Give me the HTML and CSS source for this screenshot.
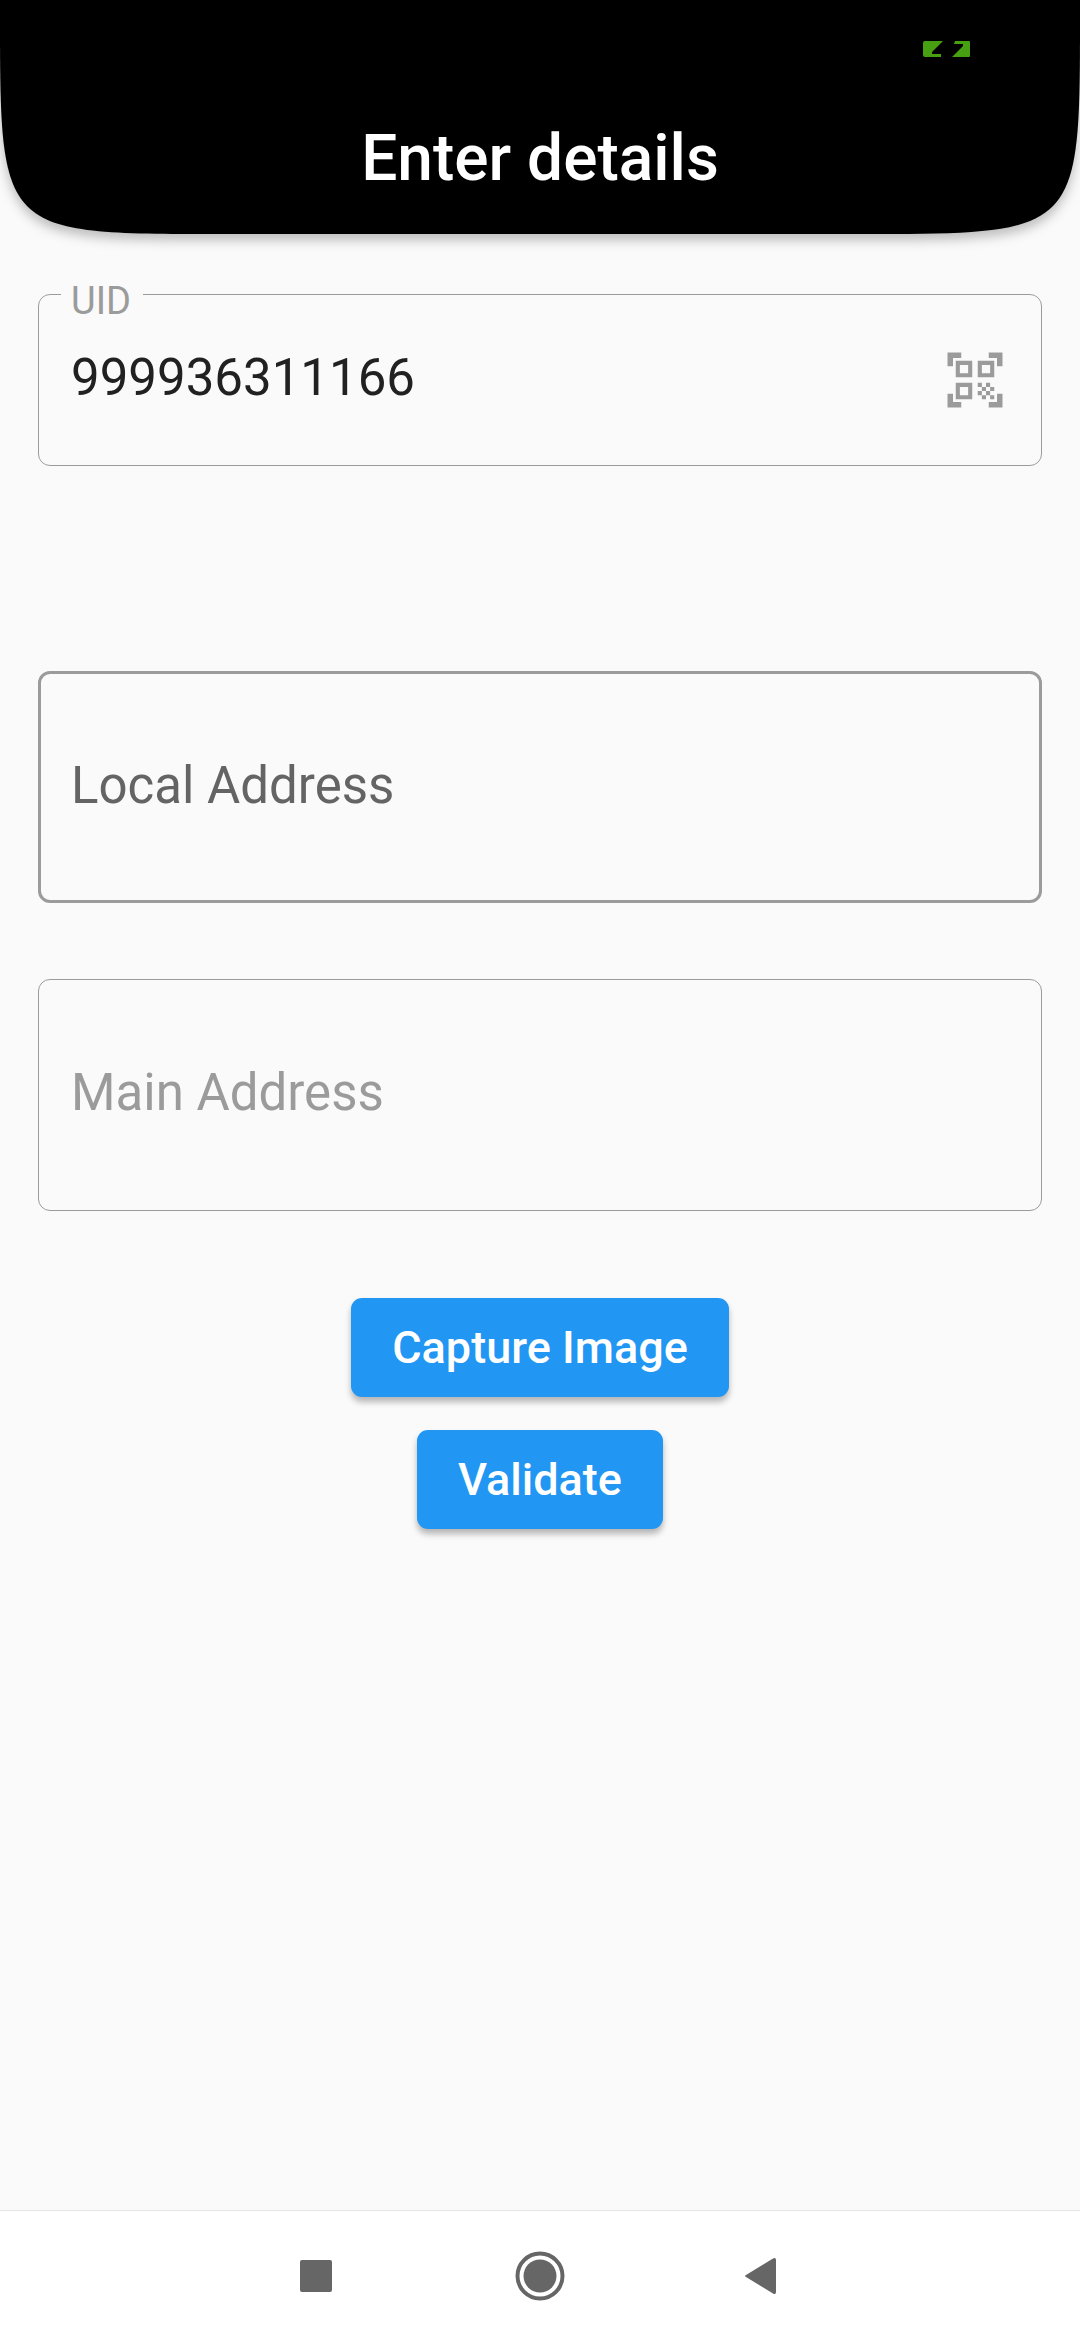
FILE: index.html
```html
<!DOCTYPE html>
<html lang="en">
<head>
<meta charset="utf-8">
<meta name="viewport" content="width=device-width, initial-scale=1">
<title>Enter details</title>
<link rel="stylesheet" href="styles.css">
</head>
<body>
<header class="header">
  <div class="header-shape" aria-hidden="true">
    <svg class="header-corner" viewBox="0 0 220 234"><path d="M0 0H220V234C0 234 0 234 0 14Z"/></svg>
    <div class="header-fill"></div>
    <svg class="header-corner" viewBox="0 0 220 234"><path d="M220 0H0V234C220 234 220 234 220 14Z"/></svg>
  </div>
  <div class="status-bar">
    <svg class="battery" viewBox="0 0 47 16" role="img" aria-label="Battery charging">
      <path d="M2 0H20L9 11V13H18V16H2Q0 16 0 14V2Q0 0 2 0Z"/>
      <path d="M32 0H46Q47 0 47 1V15Q47 16 46 16H29L40 5V3H31Z"/>
    </svg>
  </div>
  <h1 class="title">Enter details</h1>
</header>

<main class="content">
  <form class="form">
    <div class="field field-uid">
      <label class="field-label" for="uid">UID</label>
      <input class="field-input" id="uid" type="text" inputmode="numeric" value="999936311166">
      <button class="scan" type="button" aria-label="Scan QR code">
        <svg class="scan-icon" viewBox="0 0 24 24"><path d="M9.5 6.5v3h-3v-3h3M11 5H5v6h6V5zM9.500 14.500v3h-3v-3h3M11 13H5v6h6v-6zM17.500 6.500v3h-3v-3h3M19 5h-6v6h6V5zM13 13h1.500v1.500H13zM14.500 14.500H16V16h-1.500zM16 13h1.500v1.500H16zM13 16h1.500v1.500H13zM14.500 17.500H16V19h-1.500zM16 16h1.500v1.500H16zM17.500 14.500H19V16h-1.500zM17.500 17.500H19V19h-1.500zM22 7h-2V4h-3V2h5zM22 22v-5h-2v3h-3v2zM2 22h5v-2H4v-3H2zM2 2v5h2V4h3V2z"/></svg>
      </button>
    </div>
    <div class="field field-address field-active">
      <input class="field-input" type="text" placeholder="Local Address" aria-label="Local Address">
    </div>
    <div class="field field-address">
      <input class="field-input" type="text" placeholder="Main Address" aria-label="Main Address" disabled>
    </div>
    <div class="actions">
      <button class="action" type="button">Capture Image</button>
      <button class="action" type="button">Validate</button>
    </div>
  </form>
</main>

<nav class="nav-bar" aria-label="System navigation">
  <button class="nav-button" type="button" aria-label="Recent apps">
    <svg viewBox="0 0 64 64"><rect x="16" y="16" width="32" height="32" rx="2"/></svg>
  </button>
  <button class="nav-button" type="button" aria-label="Home">
    <svg viewBox="0 0 64 64"><circle cx="32" cy="32" r="16.500"/><circle class="nav-ring" cx="32" cy="32" r="22.500"/></svg>
  </button>
  <button class="nav-button" type="button" aria-label="Back">
    <svg viewBox="0 0 64 64"><path d="M14 31L41 14.500Q44 13 44 16V48Q44 51 41 49.500L14 33Q12 32 14 31Z"/></svg>
  </button>
</nav>
</body>
</html>
```

FILE: styles.css
```css
* {
  box-sizing: border-box;
}

body {
  display: flex;
  flex-direction: column;
  min-height: 100vh;
  margin: 0;
  background: #fafafa;
  color: #212121;
  font-family: Roboto, "Liberation Sans", sans-serif;
}

button,
input {
  margin: 0;
  padding: 0;
  border: 0;
  background: none;
  font-family: inherit;
}

svg {
  display: block;
}

/* Header */

.header {
  position: relative;
}

/* Black backdrop with continuous rounded lower corners */
.header-shape {
  position: absolute;
  inset: 0;
  z-index: -1;
  display: flex;
  filter: drop-shadow(0 6px 6px rgba(0, 0, 0, 0.25));
}

.header-corner {
  width: 220px;
  height: 234px;
}

.header-fill {
  flex: 1;
  background: #000;
}

.status-bar {
  display: flex;
  justify-content: flex-end;
  height: 84px;
  padding: 41px 110px 0;
}

.battery {
  width: 47px;
  height: 16px;
  fill: #46a012;
}

.title {
  margin: 0;
  color: #fff;
  font-size: 64px;
  font-weight: 500;
  line-height: 150px;
  text-align: center;
}

/* Form */

.content {
  flex: 1;
  padding: 60px 38px;
}

.form {
  display: flex;
  flex-direction: column;
}

.field {
  position: relative;
  display: flex;
  align-items: center;
  border: 1px solid #9b9b9b;
  border-radius: 12px;
}

.field-uid {
  height: 172px;
  margin-bottom: 205px;
  padding-right: 33px;
}

.field-address {
  height: 232px;
  margin-bottom: 76px;
}

.field-active {
  border: 3px solid #9b9b9b;
}

.field-label {
  position: absolute;
  top: -17px;
  left: 22px;
  padding: 0 12px 0 10px;
  background: #fafafa;
  color: #9b9b9b;
  font-size: 38px;
  line-height: 46px;
}

.field-input {
  flex: 1;
  min-width: 0;
  height: 100%;
  padding: 0 32px 6px;
  color: #212121;
  font-size: 51px;
  outline: 0;
}

.field-active .field-input {
  padding: 0 30px 4px;
}

.field-input::placeholder {
  color: #9b9b9b;
  opacity: 1;
}

.field-active .field-input::placeholder {
  color: #646464;
}

.scan-icon {
  width: 66px;
  height: 66px;
  fill: #9b9b9b;
}

.actions {
  display: flex;
  flex-direction: column;
  align-items: center;
  gap: 33px;
  padding-top: 11px;
}

.action {
  height: 99px;
  padding: 0 41px;
  border-radius: 11px;
  background: #2196f3;
  box-shadow: 0 5px 6px rgba(0, 0, 0, 0.28);
  color: #fff;
  font-size: 45px;
  font-weight: 500;
}

/* System navigation */

.nav-bar {
  display: flex;
  align-items: center;
  justify-content: center;
  gap: 160px;
  height: 130px;
  border-top: 1px solid #e4e4e4;
  background: #fff;
}

.nav-button {
  width: 64px;
  height: 64px;
  fill: #666;
}

.nav-ring {
  fill: none;
  stroke: #666;
  stroke-width: 4px;
}
```
